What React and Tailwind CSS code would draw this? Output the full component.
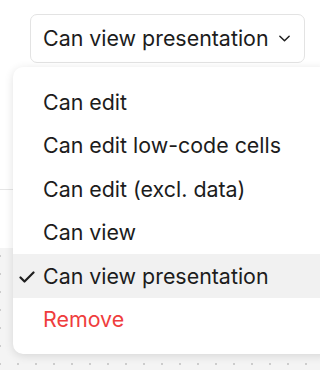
import React from "react";

const items = [
  { label: "Can edit" },
  { label: "Can edit low-code cells" },
  { label: "Can edit (excl. data)" },
  { label: "Can view" },
  { label: "Can view presentation", selected: true },
  { label: "Remove", danger: true },
];

function Chevron() {
  return (
    <svg width="13" height="13" viewBox="0 0 14 14" fill="none" stroke="#1f1f1f" strokeWidth="1.6" strokeLinecap="round" strokeLinejoin="round">
      <path d="M2 4.5l5 5 5-5" />
    </svg>
  );
}

function Check() {
  return (
    <svg width="16" height="12" viewBox="0 0 16 12" fill="none" stroke="#1f1f1f" strokeWidth="2.2" strokeLinecap="round" strokeLinejoin="round">
      <path d="M1.5 6.5l4 4 9-9" />
    </svg>
  );
}

export default function App() {
  return (
    <div className="relative h-[370px] w-[320px] overflow-hidden bg-white font-['Inter',sans-serif] text-[#1c1c1c]">
      <div className="h-[190px] border-b border-[#e6e6e6]">
        <div className="flex pl-[30px] pt-[14px]">
          <button className="flex h-[49px] w-[275px] items-center gap-[9px] rounded-[7px] border border-[#e3e3e3] bg-white pl-[12px] text-[21.4px]">
            <span>Can view presentation</span>
            <Chevron />
          </button>
        </div>
      </div>
      <div className="h-[58px]" />
      <div className="h-[122px] bg-[#f4f4f4] bg-[radial-gradient(circle,#cdcdcd_1px,transparent_1.5px)] bg-[length:18px_18px] bg-[position:-9px_-1px]" />

      <div className="absolute left-[13px] top-[67px] w-[320px] rounded-[10px] bg-white py-[13px] shadow-[0_2px_10px_rgba(0,0,0,0.12)]">
        {items.map((it) => (
          <div
            key={it.label}
            className={`flex h-[43.5px] items-center text-[21.4px] ${it.selected ? "bg-[#f1f1f1]" : ""} ${it.danger ? "text-[#ef3d3d]" : ""}`}
          >
            <span className="flex w-[30px] justify-end pr-[8px] pt-[2px]">{it.selected && <Check />}</span>
            <span>{it.label}</span>
          </div>
        ))}
      </div>
    </div>
  );
}
